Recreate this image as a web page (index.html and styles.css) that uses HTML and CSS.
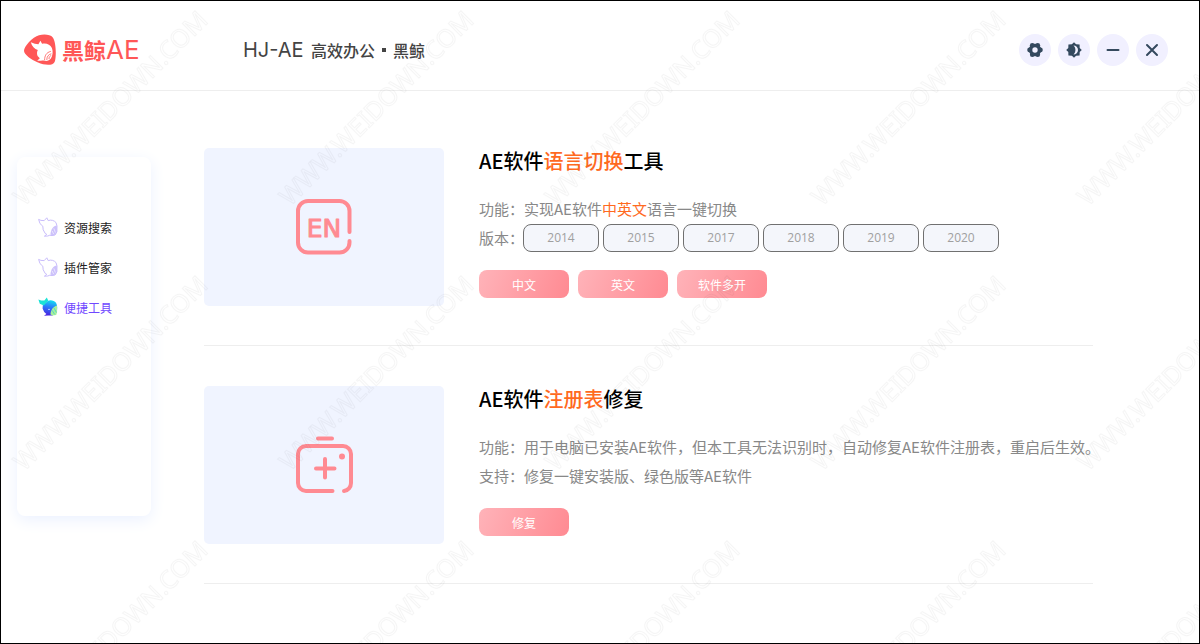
FILE: index.html
```html
<!DOCTYPE html>
<html lang="zh-CN">
<head>
  <meta charset="UTF-8">
  <meta name="viewport" content="width=device-width, initial-scale=1.0">
  <title>黑鲸AE</title>
  <link rel="stylesheet" href="styles.css">
</head>
<body>
  <svg width="0" height="0" class="sprite" aria-hidden="true">
    <defs>
      <linearGradient id="whale-body" x1="0.6" y1="0" x2="0.4" y2="1">
        <stop offset="0" stop-color="#12e0f0"/>
        <stop offset="0.45" stop-color="#2b7bfa"/>
        <stop offset="1" stop-color="#4a1fe0"/>
      </linearGradient>
      <symbol id="whale-line" viewBox="0 0 20 20">
        <path d="M.6 2.4 3 3.4l3.2.2L8.8.8l1.4 2.8c3-1.2 6.200 0 7.800 2l1 3.400-.2 6-1.800 3-3 .6-2.200-.4-2 .8-3.400.2 2.400-1.800-1.600-1-2-3.600-.4-3.600L2 6.600z" fill="#fff" stroke="#c9bdfb" stroke-width="1"/>
        <path d="M18.800 8.600c-3.400 0-5.800 3.600-6.400 8.800l2.400 1 2.600-1 1.800-3z" fill="#cdc2fb"/>
        <path d="m14.200 14 1.400 3M15.800 11.400l1.600 4.200" stroke="#fff" stroke-width=".6"/>
      </symbol>
      <symbol id="whale-color" viewBox="0 0 20 20">
        <path d="M10 3.800c3-1.400 6.400 0 8 2 1.600 2.600 1.600 7 .4 10l-4 2.800-4.400-.2-4 .4 2.400-1.800-2.200-2-1.600-3.400.2-3.400z" fill="url(#whale-body)"/>
        <path d="M.4 2.600 3.200 3.400 6.400 3.600 8.800.4l1.400 3.200-4.400 5-4-1.800z" fill="#1be3d6"/>
        <path d="M19 8.400c-3.600 1-6.200 4.400-6.600 8.800l1.800 1.400 4-.6.900-3z" fill="#a9f29b"/>
        <path d="m14.200 13.400 2.400 4M16 11l2.400 4.400" stroke="#35c6dc" stroke-width=".7"/>
        <circle cx="11" cy="12.400" r=".7" fill="#dff"/>
      </symbol>
    </defs>
  </svg>

  <div class="window">
    <header class="header">
      <a class="logo" href="#">
        <svg class="logo-mark" viewBox="0 0 32 32" aria-hidden="true">
          <path d="M15 1.200C20-.2 26.500.4 28.800 3.400 32.300 8.400 32.500 23.500 30.600 28 28.800 32 20.500 31.400 14 28.600 7 25.600 0 20.600 0 16.800 0 12.400 8.500 3 15 1.200z" fill="#ff5757"/>
          <path d="M6.800 8.200l4 1.600 3.600.4 2-3.400 1.700 3c4.400-1 8 .8 9.800 4.200 1.400 3.400.8 8-1 10.600-1.800 2.400-4.600 2.800-6.900 2-1.800-.6-2.600.4-6.800.2l2.600-2.600-2.200-2.200c-.8-2-.8-4 .2-6-3.200-1-6-3.600-7-7.800z" fill="#fff"/>
          <path d="M20.600 26c0-4 1.600-7.600 6.200-8.600M22.800 26c0-3.400 1.600-5.600 4.600-6.200M25 25c0-2 .8-3 2.200-3.400" fill="none" stroke="#ff5757" stroke-width=".8"/>
        </svg>
        <span class="logo-text">黑鲸<span class="logo-latin">AE</span></span>
      </a>
      <div class="slogan"><span class="slogan-latin">HJ-AE</span><span>高效办公</span><span class="slogan-dot"></span><span>黑鲸</span></div>
      <div class="window-controls">
        <button class="control" type="button" aria-label="设置">
          <svg viewBox="0 0 16 16">
            <circle cx="8" cy="8" r="6.200"/>
            <circle cx="13.400" cy="8" r="2.400"/>
            <circle cx="10.700" cy="12.700" r="2.400"/>
            <circle cx="5.300" cy="12.700" r="2.400"/>
            <circle cx="2.600" cy="8" r="2.400"/>
            <circle cx="5.300" cy="3.300" r="2.400"/>
            <circle cx="10.700" cy="3.300" r="2.400"/>
            <circle class="hole" cx="8" cy="8" r="2.700"/>
          </svg>
        </button>
        <button class="control" type="button" aria-label="切换主题">
          <svg viewBox="0 0 16 16"><path fill-rule="evenodd" d="M8 .2 10.100 2.300l3.500.1.100 3.500L15.800 8l-2.100 2.100-.1 3.500-3.500.1L8 15.800l-2.100-2.100-3.500-.1-.1-3.500L.2 8l2.100-2.100.1-3.500 3.500-.1zM7.500 3.500c2.600 2.200 2.600 6.800 0 9a4.500 4.500 0 0 0 0-9z"/></svg>
        </button>
        <button class="control" type="button" aria-label="最小化">
          <svg viewBox="0 0 16 16"><path class="stroke" d="M2.500 8h11"/></svg>
        </button>
        <button class="control" type="button" aria-label="关闭">
          <svg viewBox="0 0 16 16"><path class="stroke" d="m3 3 10 10M13 3 3 13"/></svg>
        </button>
      </div>
    </header>

    <main class="main">
      <nav class="sidebar">
        <a class="nav-item" href="#"><svg class="nav-icon" aria-hidden="true"><use href="#whale-line"/></svg>资源搜索</a>
        <a class="nav-item" href="#"><svg class="nav-icon" aria-hidden="true"><use href="#whale-line"/></svg>插件管家</a>
        <a class="nav-item active" href="#"><svg class="nav-icon" aria-hidden="true"><use href="#whale-color"/></svg>便捷工具</a>
      </nav>

      <div class="content">
        <section class="tool">
          <div class="thumb">
            <svg class="thumb-icon" viewBox="0 0 60 60" aria-hidden="true">
              <path d="M55.500 35V14a10 10 0 0 0-10-10h-31.500a10 10 0 0 0-10 10v31.500a10 10 0 0 0 10 10h31.500a10 10 0 0 0 10-10v-1.500"/>
              <text class="thumb-text" x="30" y="40" text-anchor="middle">EN</text>
            </svg>
          </div>
          <div class="info">
            <h2 class="title">AE软件<em>语言切换</em>工具</h2>
            <p class="line">功能：实现AE软件<em>中英文</em>语言一键切换</p>
            <div class="line versions">
              <span>版本：</span>
              <button class="version" type="button">2014</button>
              <button class="version" type="button">2015</button>
              <button class="version" type="button">2017</button>
              <button class="version" type="button">2018</button>
              <button class="version" type="button">2019</button>
              <button class="version" type="button">2020</button>
            </div>
            <div class="actions">
              <button class="action" type="button">中文</button>
              <button class="action" type="button">英文</button>
              <button class="action" type="button">软件多开</button>
            </div>
          </div>
        </section>

        <section class="tool">
          <div class="thumb">
            <svg class="thumb-icon" viewBox="0 0 60 60" aria-hidden="true">
              <path d="M24 3.500h14M38.500 56H12a8 8 0 0 1-8-8V19a8 8 0 0 1 8-8h37a8 8 0 0 1 8 8v29a8 8 0 0 1-7 8"/>
              <path d="M31 24v18.500M22 33.500h18.500"/>
              <circle class="dot" cx="48" cy="21.500" r="3"/>
            </svg>
          </div>
          <div class="info">
            <h2 class="title">AE软件<em>注册表</em>修复</h2>
            <p class="line">功能：用于电脑已安装AE软件，但本工具无法识别时，自动修复AE软件注册表，重启后生效。</p>
            <p class="line">支持：修复一键安装版、绿色版等AE软件</p>
            <div class="actions">
              <button class="action" type="button">修复</button>
            </div>
          </div>
        </section>
      </div>
    </main>

    <svg class="watermark" aria-hidden="true">
      <defs>
        <pattern id="mark" width="266" height="265" patternUnits="userSpaceOnUse">
          <text class="watermark-text" transform="translate(23 206) rotate(-45)">WWW.WEIDOWN.COM</text>
        </pattern>
      </defs>
      <rect width="100%" height="100%" fill="url(#mark)"/>
    </svg>
  </div>
</body>
</html>
```

FILE: styles.css
```css
* {
  box-sizing: border-box;
}
body {
  margin: 0;
  font-family: "Noto Sans CJK SC", sans-serif;
  font-size: 12px;
  color: #222;
  background-color: #fff;
}
h2, p {
  margin: 0;
}
em {
  font-style: normal;
  color: #ff6a1f;
}
a {
  color: inherit;
  text-decoration: none;
}
button {
  padding: 0;
  border: none;
  font-family: inherit;
  font-size: 12px;
  cursor: pointer;
}
.sprite {
  position: absolute;
}
.window {
  position: relative;
  display: flex;
  flex-direction: column;
  min-height: 100vh;
  border: 1px solid #000;
}

/* header */
.header {
  display: flex;
  align-items: center;
  height: 90px;
  padding: 8px 31px 0 23px;
  border-bottom: 1px solid #eee;
}
.logo {
  display: flex;
  align-items: center;
  gap: 6px;
  width: 219px;
  color: #ff5757;
}
.logo-mark {
  width: 32px;
  height: 32px;
}
.logo-text {
  font-size: 22px;
  font-weight: bold;
  line-height: 32px;
}
.logo-latin {
  font-family: Inter, sans-serif;
  font-size: 26px;
  font-weight: normal;
}
.slogan {
  display: flex;
  align-items: center;
  font-size: 16px;
  font-weight: 500;
  line-height: 24px;
  color: #444;
}
.slogan-latin {
  width: 68px;
  font-family: Inter, sans-serif;
  font-size: 20px;
  font-weight: normal;
}
.slogan-dot {
  width: 4px;
  height: 4px;
  margin: 0 7px;
  background-color: #444;
}
.window-controls {
  display: flex;
  gap: 7px;
  margin-left: auto;
}
.control {
  display: flex;
  align-items: center;
  justify-content: center;
  width: 32px;
  height: 32px;
  border-radius: 50%;
  background-color: #f1f0ff;
}
.control svg {
  width: 16px;
  height: 16px;
  fill: #34495e;
}
.control .hole {
  fill: #f1f0ff;
}
.control .stroke {
  fill: none;
  stroke: #34495e;
  stroke-width: 2;
  stroke-linecap: round;
}

/* body */
.main {
  display: flex;
  flex: 1;
  gap: 53px;
  padding: 0 106px 0 16px;
}
.sidebar {
  flex: none;
  width: 134px;
  margin: 66px 0 127px;
  padding-top: 50px;
  border-radius: 8px;
  background-color: #fff;
  box-shadow: 0 4px 16px #ebf1ff;
}
.nav-item {
  display: flex;
  align-items: center;
  gap: 6px;
  height: 40px;
  padding-left: 21px;
}
.nav-item.active {
  color: #7048ff;
}
.nav-icon {
  width: 20px;
  height: 20px;
}
.content {
  flex: 1;
  min-width: 0;
  padding-top: 17px;
}
.tool {
  display: flex;
  gap: 35px;
  padding: 40px 0 39px;
  border-bottom: 1px solid #eee;
}
.thumb {
  display: flex;
  flex: none;
  align-items: center;
  justify-content: center;
  width: 240px;
  height: 158px;
  border-radius: 5px;
  background-color: #f0f4ff;
}
.thumb-icon {
  width: 60px;
  height: 60px;
  fill: none;
  stroke: #ff8a92;
  stroke-width: 4;
  stroke-linecap: round;
  stroke-linejoin: round;
}
.thumb-icon .dot {
  fill: #ff8a92;
  stroke: none;
}
.thumb-text {
  font-family: "DejaVu Sans", sans-serif;
  font-size: 25px;
  font-weight: normal;
  fill: #ff8a92;
  stroke-width: 1;
}
.title {
  margin-bottom: 20px;
  font-size: 20px;
  font-weight: 500;
  line-height: 26px;
  color: #000;
}
.line {
  font-size: 15px;
  line-height: 29px;
  color: #888;
  white-space: nowrap;
}
.versions {
  display: flex;
  align-items: center;
  gap: 4px;
}
.versions span {
  width: 40px;
}
.version {
  width: 76px;
  height: 28px;
  border: 1px solid #707070;
  border-radius: 8px;
  background-color: #f4f6fb;
  font-family: "Open Sans", sans-serif;
  color: #a0a0a0;
}
.actions {
  display: flex;
  gap: 9px;
  margin-top: 18px;
}
.action {
  width: 90px;
  height: 28px;
  border-radius: 8px;
  background: linear-gradient(110deg, #ffb3b9, #ff8a92);
  color: #fff;
}

.watermark {
  position: absolute;
  inset: 0;
  width: 100%;
  height: 100%;
  pointer-events: none;
}
.watermark-text {
  font-family: "Noto Sans", sans-serif;
  font-size: 25px;
  fill: none;
  stroke: #000;
  stroke-opacity: 0.04;
}
```
